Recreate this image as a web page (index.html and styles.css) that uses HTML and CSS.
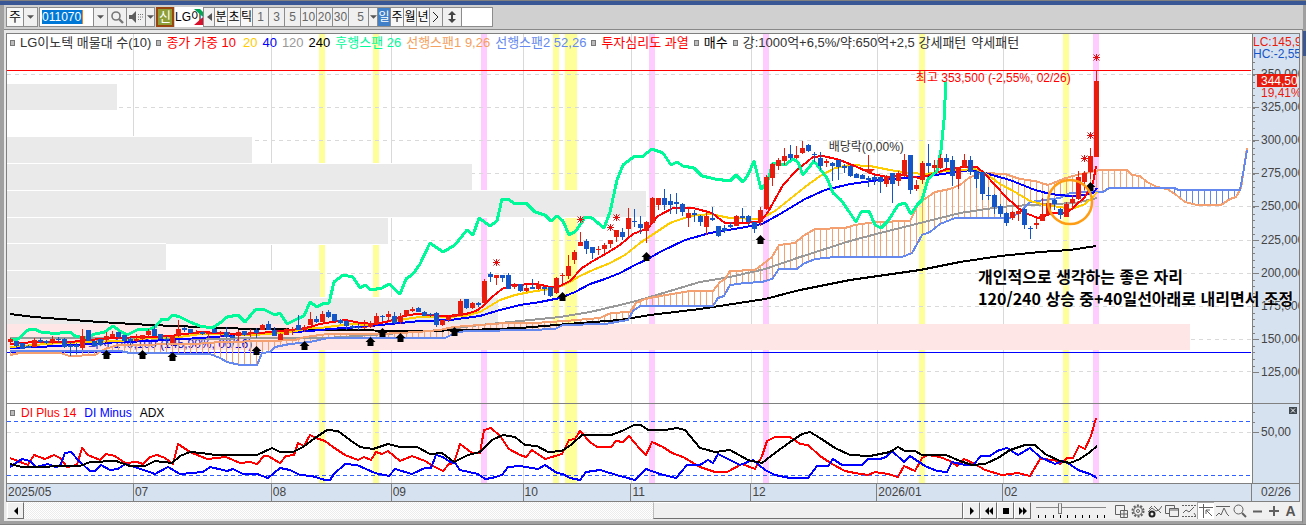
FILE: index.html
```html
<!DOCTYPE html>
<html lang="ko">
<head>
<meta charset="utf-8">
<title>LG이노텍 차트</title>
<link rel="stylesheet" href="styles.css">
</head>
<body>
<div class="window">
  <div class="titlebar"></div>
  <form class="toolbar">
    <button type="button" class="btn kind">주</button>
    <button type="button" class="btn drop" aria-label="종목 구분"><svg class="caret" viewBox="0 0 8 4"><path d="M0 0h8L4 4z"/></svg></button>
    <div class="code"><input class="code-input" type="text" value="011070" aria-label="종목코드"></div>
    <button type="button" class="btn drop" aria-label="종목 목록"><svg class="caret" viewBox="0 0 8 4"><path d="M0 0h8L4 4z"/></svg></button>
    <button type="button" class="btn icon-btn" aria-label="검색"><svg viewBox="0 0 14 14"><circle cx="6" cy="6" r="4" fill="none" stroke="#777" stroke-width="1.6"/><path d="M9 9l4 4" stroke="#777" stroke-width="2.4"/></svg></button>
    <button type="button" class="btn icon-btn" aria-label="음성"><svg viewBox="0 0 14 14"><path d="M0 5h3l4-4v12L3 9H0z" fill="#5c5c5c"/><path d="M9.500 4v7M11.500 4v7M13.500 4v4" stroke="#777" stroke-dasharray="1 1.500"/></svg></button>
    <button type="button" class="btn drop slim" aria-label="음성 설정"><svg class="caret" viewBox="0 0 8 4"><path d="M0 0h8L4 4z"/></svg></button>
    <span class="badge">신</span>
    <span class="name">LG이<svg class="flag" viewBox="0 0 9 16"><path d="M0 0h6l3 3v5z" fill="#00a651"/><path d="M9 8v8H0z" fill="#d8102c"/></svg></span>
    <button type="button" class="btn prev" aria-label="이전"><svg viewBox="0 0 5 8"><path d="M5 0v8L0 4z" fill="#555"/></svg></button>
    <button type="button" class="btn unit">분</button>
    <button type="button" class="btn unit">초</button>
    <button type="button" class="btn unit tick">틱</button>
    <button type="button" class="btn num">1</button>
    <button type="button" class="btn num">3</button>
    <button type="button" class="btn num">5</button>
    <button type="button" class="btn num">10</button>
    <button type="button" class="btn num">20</button>
    <button type="button" class="btn num">30</button>
    <input class="minutes" type="text" value="5" aria-label="분 간격">
    <button type="button" class="btn drop slim" aria-label="분 간격 목록"><svg class="caret" viewBox="0 0 8 4"><path d="M0 0h8L4 4z"/></svg></button>
    <button type="button" class="btn unit on">일</button>
    <button type="button" class="btn unit">주</button>
    <button type="button" class="btn unit">월</button>
    <button type="button" class="btn unit">년</button>
    <button type="button" class="btn more" aria-label="더보기"><svg viewBox="0 0 8 10"><path d="M1 0l5 5-5 5" fill="none" stroke="#222"/></svg></button>
    <button type="button" class="btn updown" aria-label="높이"><svg viewBox="0 0 8 12"><path d="M4 0l4 4H5v4h3l-4 4-4-4h3V4H0z" fill="#444"/></svg></button>
    <input class="blank" type="text" aria-label="입력">
  </form>

  <main class="frame">
    <div class="charts">
      <section class="panel main">
        <svg id="price" class="plot" viewBox="7 34 1245 369" preserveAspectRatio="none"></svg>
        <div class="legend">
          <i class="mark"></i><span class="c-dark">LG이노텍 매물대 수(10)</span>
          <i class="mark"></i><span class="c-red">종가 가중 10</span>
          <span class="c-gold">20</span><span class="c-blue">40</span><span class="c-gray">120</span><span class="c-black">240</span>
          <span class="c-green">후행스팬 26</span><span class="c-orange">선행스팬1 9,26</span><span class="c-sky">선행스팬2 52,26</span>
          <i class="mark"></i><span class="c-red">투자심리도 과열</span>
          <i class="mark"></i><span class="c-black">매수</span>
          <i class="mark"></i><span class="c-dark">강:1000억+6,5%/약:650억+2,5 강세패턴</span><span class="c-dark">약세패턴</span>
        </div>
        <span class="note high">최고 353,500 (-2,55%, 02/26)</span>
        <span class="note exdiv">배당락(0,00%)</span>
        <p class="memo">개인적으로 생각하는 좋은 자리<br>120/240 상승 중+40일선아래로 내리면서 조정</p>
      </section>
      <svg id="price-axis" class="axis" viewBox="1252 34 47 369"></svg>
      <section class="panel sub">
        <svg id="dmi" class="plot" viewBox="7 404 1245 79" preserveAspectRatio="none"></svg>
        <div class="legend small">
          <i class="mark"></i><span class="c-red">DI Plus 14</span><span class="c-blue">DI Minus</span><span class="c-black">ADX</span>
        </div>
      </section>
      <svg id="dmi-axis" class="axis sub-axis" viewBox="1252 404 47 79">
        <path d="M1252 412.500h3M1252 422.500h3M1252 432.500h7" stroke="#808080" shape-rendering="crispEdges"/>
        <text x="1261" y="436">50,00</text>
        <rect x="1289" y="407" width="8" height="7" fill="#404850"/>
        <path d="M1291 408.500l4 4M1295 408.500l-4 4" stroke="#fff"/>
      </svg>
      <div class="months">
        <span>2025/05</span><span>07</span><span>08</span><span>09</span><span>10</span><span>11</span><span>12</span><span>2026/01</span><span>02</span>
      </div>
      <div class="last-date">02/26</div>
    </div>

    <footer class="bottombar">
      <button type="button" class="raised" aria-label="왼쪽"><svg viewBox="0 0 8 8"><path d="M6 0v8L2 4z"/></svg></button>
      <div class="track"><div class="thumb"></div></div>
      <button type="button" class="raised" aria-label="재생"><svg viewBox="0 0 8 8"><path d="M2 0v8l4-4z"/></svg></button>
      <button type="button" class="raised" aria-label="되감기"><svg viewBox="0 0 8 8"><path d="M4 0v8L0 4zM8 0v8L4 4z"/></svg></button>
      <button type="button" class="raised" aria-label="정지"><svg viewBox="0 0 8 8"><path d="M1 1h6v6H1z"/></svg></button>
      <button type="button" class="raised" aria-label="빨리감기"><svg viewBox="0 0 8 8"><path d="M0 0v8l4-4zM4 0v8l4-4z"/></svg></button>
      <div class="speed">
        <input type="range" min="0" max="100" value="33" aria-label="속도">
        <svg viewBox="0 0 70 3" preserveAspectRatio="none"><path d="M2.500 0v3M9.500 0v3M17.500 0v3M24.500 0v3M31.500 0v3M39.500 0v3M46.500 0v3M53.500 0v3M61.500 0v3M68.500 0v3" stroke="#000"/></svg>
      </div>
      <div class="tools">
        <button type="button" aria-label="창 추가"><svg viewBox="0 0 14 14"><path d="M6 10.500H1.500V1.500h9V6M6.500 6.500h7v7h-7zM10 6.500v7M6.500 10h7"/></svg></button>
        <button type="button" aria-label="설정"><svg viewBox="0 0 14 14"><circle cx="7" cy="7" r="5.500" stroke-width="2" stroke-dasharray="2 1.450"/><circle cx="7" cy="7" r="4.200"/><circle cx="7" cy="7" r="1.500"/></svg></button>
        <button type="button" aria-label="지표 설정"><svg viewBox="0 0 14 14"><path d="M0 8l4-4 4 3 3-1 3-4M6 2l3 3 4 4M1 5l3-3"/><circle cx="4" cy="10" r="2.500" stroke="#222" stroke-width="2"/></svg></button>
        <button type="button" aria-label="창 겹치기"><svg viewBox="0 0 14 14"><path d="M4.500 9.500h-4v-8h9v3M4.500 4.500h9v8h-9zM4.500 6h9"/></svg></button>
        <button type="button" aria-label="차트 영역"><svg viewBox="0 0 14 14"><path d="M0 1.500h14M0 12.500h14" stroke-dasharray="2 1"/><path d="M1 9l3-3 3 2 5-5M12 9l2 3"/></svg></button>
        <button type="button" class="pressed" aria-label="십자선"><svg viewBox="0 0 14 14"><path d="M0 3.500h14M4.500 0v14M7 6l6 6M7 10V6h4"/></svg></button>
        <button type="button" aria-label="추세선"><svg viewBox="0 0 14 14"><path d="M0 2.500h14M0 12l3-3 2 2 3-7 3 6 2 2"/></svg></button>
        <button type="button" aria-label="돋보기"><svg viewBox="0 0 14 14"><circle cx="5.500" cy="5.500" r="4.500"/><path d="M9 9l4 4" stroke-width="2"/></svg></button>
        <button type="button" aria-label="축소"><svg viewBox="0 0 14 14"><path d="M3 7.500h9" stroke-width="2"/></svg></button>
        <button type="button" aria-label="확대"><svg viewBox="0 0 14 14"><path d="M2 7h10M7 2v10" stroke-width="2"/></svg></button>
        <button type="button" class="auto">A</button>
      </div>
    </footer>
  </main>
  <div class="side"></div>
</div>
<script src="chart.js"></script>
</body>
</html>
```
FILE: styles.css
```css
* { box-sizing: border-box; }
body {
  margin: 0;
  font: 12px/16px "Liberation Sans", "Noto Sans CJK KR", sans-serif;
  color: #333;
}
button, input { font: inherit; color: inherit; margin: 0; padding: 0; border: 0; border-radius: 0; }
.window {
  height: 100vh;
  min-height: 400px;
  display: grid;
  grid-template: 5px 24px 1fr / 4px 1fr 3px;
  background: #a0a0a0;
  border-bottom: 1px solid #808080;
  overflow: hidden;
}
.titlebar { grid-column: 1 / -1; background: #3a5795; border-top: 1px solid #808080; }

/* Toolbar */
.toolbar {
  grid-column: 2 / 3;
  display: flex;
  align-items: center;
  background: #d0d0d0;
  padding: 0 2px;
  overflow: hidden;
}
.btn, .code, .minutes, .blank, .name {
  height: 20px;
  border: 1px solid #8c8c8c;
  border-left-width: 0;
  background: #f0f0f0;
  display: flex;
  align-items: center;
  justify-content: center;
  flex: none;
  font-size: 13px;
}
.kind { width: 18px; border-left-width: 1px; background: #f8f8f8; color: #000; }
.drop { width: 14px; }
.drop.slim { width: 9px; }
.caret { width: 7px; height: 4px; fill: #555; }
.code { width: 55px; margin-left: 1px; border-left-width: 1px; background: #fff; justify-content: flex-start; padding-left: 2px; }
.code-input { width: 41px; height: 14px; font-size: 12px; line-height: 14px; background: #0078d7; color: #fff; border-right: 1px solid #f08020; }
.icon-btn { width: 19px; }
.icon-btn svg { width: 14px; height: 14px; }
.badge { width: 18px; height: 20px; margin: 0 1px; flex: none; border: 2px solid #994510; background: #8f9f38; color: #fff; font-size: 13px; line-height: 16px; text-align: center; }
.name { width: 28px; position: relative; background: #fff; color: #000; border: 0; justify-content: flex-start; overflow: hidden; white-space: nowrap; font-size: 12px; }
.flag { position: absolute; right: 0; top: 2px; width: 9px; height: 16px; }
.prev { width: 12px; border-left-width: 1px; }
.prev svg { width: 5px; height: 8px; }
.unit { width: 13px; background: #f8f8f8; color: #000; font-size: 12px; }
.unit.on { background: #4080c8; color: #fff; }
.tick { width: 12px; }
.num { width: 16px; color: #666; font-size: 12px; }
.minutes { width: 20px; text-align: right; padding-right: 4px; color: #666; border-right: 1px solid #8c8c8c; font-size: 12px; }
.more { width: 13px; }
.more svg { width: 8px; height: 10px; }
.updown { width: 19px; }
.updown svg { width: 8px; height: 12px; }
.blank { width: 31px; background: #fff; }

/* Frame */
.frame {
  grid-column: 2;
  min-width: 0;
  min-height: 0;
  display: flex;
  flex-direction: column;
  background: #e9e9e9;
  border-top: 1px solid #888;
  border-right: 1px solid #808080;
  border-bottom: 3px solid #a0a0a0;
  padding: 3px 2px 2px;
}
.side { grid-column: 3; height: 25px; margin-top: 2px; background: #3a5795; }
.charts {
  flex: 1;
  min-height: 0;
  display: grid;
  grid-template: minmax(0, 1fr) 80px 18px / minmax(0, 1fr) 47px;
  border: 1px solid #808080;
  background: #fff;
}
.panel { display: grid; position: relative; min-width: 0; min-height: 0; }
.plot, .legend { grid-area: 1 / 1; }
.plot { width: 100%; height: 100%; display: block; min-height: 0; }
.axis { width: 47px; height: 100%; min-height: 0; background: #d7e2f0; overflow: hidden; font-size: 12px; fill: #444; box-shadow: inset 1px 0 #808080; }
.sub, .sub-axis { border-top: 1px solid #808080; }
.months {
  display: grid;
  grid-template-columns: 127fr 138fr 120fr 132fr 108fr 120fr 126fr 126fr 249fr;
  background: #d7e2f0;
  border-top: 1px solid #808080;
}
.months span { padding-left: 1px; border-right: 1px solid #808080; color: #444; }
.last-date { background: #d7e2f0; border-top: 1px solid #808080; padding-left: 9px; color: #444; }
.legend {
  display: flex;
  align-items: center;
  align-self: start;
  gap: 5px;
  height: 17px;
  padding-left: 3px;
  font-size: 13px;
  white-space: nowrap;
  overflow: hidden;
}
.legend.small { font-size: 12px; gap: 8px; height: 17px; }
.small .mark { margin-right: -2px; }
.mark { width: 5px; height: 6px; border: 1px solid #777; background: #bbb; flex: none; }
.c-gold { margin-left: 2px; }
.c-dark { color: #333; }
.c-black { color: #000; }
.c-red { color: #f00; }
.c-gold { color: #fc0; }
.c-blue { color: #00f; }
.c-gray { color: #999; }
.c-green { color: #00fa9a; }
.c-orange { color: #f4a060; }
.c-sky { color: #6488ee; }
.note { position: absolute; font-size: 12px; white-space: nowrap; }
.high { left: 73%; top: 36px; color: #f00; }
.exdiv { left: 66%; top: 105px; }
.memo {
  position: absolute;
  z-index: 1;
  left: 78%;
  top: 231px;
  margin: 0;
  font: 700 16px/22px "Noto Sans CJK KR", sans-serif;
  color: #000;
  white-space: nowrap;
  text-shadow: 0 0 2px #fff, 0 0 1px #fff;
}

/* Bottom bar */
.bottombar { flex: none; height: 17px; display: flex; background: #f0f0f0; padding-left: 1px; }
.raised {
  width: 17px;
  flex: none;
  display: flex;
  align-items: center;
  justify-content: center;
  background: #f0f0f0;
  border: 1px solid;
  border-color: #fff #707070 #707070 #fff;
}
.raised svg { width: 8px; height: 8px; fill: #000; }
.track {
  flex: 1;
  display: flex;
  justify-content: flex-end;
  background: repeating-conic-gradient(#fff 0 25%, #ececec 0 50%) 0 0 / 2px 2px;
}
.thumb { width: 33%; background: #f0f0f0; border: 1px solid; border-color: #fff #707070 #707070 #bbb; }
.speed { width: 70px; margin-left: 5px; flex: none; display: flex; flex-direction: column; }
.speed input { appearance: none; width: 100%; height: 13px; background: linear-gradient(#888, #888) 0 5px / 100% 1px no-repeat; }
.speed input::-webkit-slider-thumb { appearance: none; width: 4px; height: 11px; background: #eee; border: 1px solid #777; border-top-color: #bbb; }
.speed svg { width: 100%; height: 3px; }
.tools { flex: none; display: flex; margin: 0 1px 0 6px; }
.tools button { width: 17px; background: transparent; display: flex; align-items: center; justify-content: center; }
.tools svg { width: 14px; height: 14px; fill: none; stroke: #606060; }
.tools .pressed { background: #fff; border-left: 1px solid #aaa; border-top: 1px solid #aaa; }
.tools .auto { font-weight: 700; font-size: 14px; color: #555; }
```
FILE: chart.js
```js
const NS = 'http://www.w3.org/2000/svg';
const add = (root, tag, attrs, text) => {
  const el = document.createElementNS(NS, tag);
  for (const k in attrs) el.setAttribute(k, attrs[k]);
  if (text) el.textContent = text;
  root.appendChild(el);
  return el;
};
const pairs = s => s.trim().split(/\s+/).map(p => p.split(',').map(Number));
const line = (root, pts, color, width) =>
  add(root, 'polyline', { points: pts, fill: 'none', stroke: color, 'stroke-width': width, 'stroke-linejoin': 'round', 'shape-rendering': 'crispEdges' });
const rect = (root, x, y, w, h, fill) => add(root, 'rect', { x, y, width: w, height: h, fill, 'shape-rendering': 'crispEdges' });

const price = document.getElementById('price');
const dmi = document.getElementById('dmi');
const months = [133, 271, 391, 523, 631, 751, 877, 1003];
const yellow = [[319, 6], [373, 6], [553, 6], [565, 12], [919, 6], [1063, 6]];
const pink = [[481, 6], [649, 6], [763, 6], [1093, 6]];

function backdrop(root, top, height, rows) {
  for (const [x, w] of yellow) rect(root, x, top, w, height, '#ffff99');
  for (const [x, w] of pink) rect(root, x, top, w, height, '#ffccff');
  for (const x of months) rect(root, x, top, 1, height, '#d9d9d9');
  for (const y of rows) add(root, 'path', { d: `M7 ${y + 0.5}H1252`, stroke: '#d9d9d9', 'stroke-dasharray': '4 4', 'shape-rendering': 'crispEdges' });
}

/* Price panel */
backdrop(price, 34, 369, [74, 107, 140, 173, 206, 240, 273, 306, 339, 371]);
[[84, 117], [137, 252], [164, 472], [191, 646], [218, 388], [244, 166], [271, 320], [298, 498]].forEach(([y, right]) => {
  rect(price, 7, y - 1, right - 7, 28, '#ffffff');
  rect(price, 7, y, right - 7, 26, '#eaeaea');
});
rect(price, 7, 324, 1183, 26, '#ffe6e6');
rect(price, 7, 70, 1244, 1, '#ff0000');
rect(price, 7, 352, 1244, 1, '#0000ff');
add(price, 'text', { x: 88, y: 348, fill: '#1010c8', 'font-size': 12 }, '최저 140,100 (145,90%, 06/16)');

const spanA = '10,355 20,353 60,353 70,356 95,355 105,349 118,345 195,344 220,342 270,341 295,340 305,337 328,334 380,334 417,332 440,330 453,327 480,325 505,323 535,323 565,321 600,318 611,313 630,312 636,303 645,299 660,296 690,291 713,291 720,282 725,279 730,271 755,270 763,264 772,257 779,245 795,243 803,236 815,229 845,228 855,225 875,222 910,221 918,205 922,201 935,192 950,189 960,185 970,177 985,173 1005,174 1020,179 1035,181 1048,185 1063,179 1073,176 1090,172 1100,170 1127,170 1132,175 1140,176 1147,182 1157,187 1167,189 1175,194 1185,202 1197,205 1221,205 1230,199 1236,197 1241,188 1247,148';
const spanB = '10,351 120,351 130,353 210,354 220,358 227,362 240,365 257,365 262,353 270,352 275,347 290,344 310,342 328,338 445,338 457,332 470,331 530,330 555,329 563,325 605,324 628,320 633,311 640,306 713,306 718,298 724,296 730,285 745,283 762,282 772,279 779,269 797,269 803,264 815,259 835,257 902,257 912,253 922,235 930,232 940,224 955,218 1010,218 1020,212 1030,202 1060,198 1070,193 1085,192 1103,192 1109,188 1175,188 1178,190 1240,190 1244,168 1247,150';
const at = (pts, x) => {
  for (let i = 1; i < pts.length; i++) {
    if (x <= pts[i][0]) {
      const [a, b] = pts[i - 1], [c, d] = pts[i];
      return b + (d - b) * (x - a) / (c - a);
    }
  }
  return pts[pts.length - 1][1];
};
const a = pairs(spanA), b = pairs(spanB);
for (let x = 10; x < 1245; x += 6) {
  const y1 = at(a, x), y2 = at(b, x);
  rect(price, x, Math.min(y1, y2), 1, Math.abs(y1 - y2), x > 1172 ? '#6488ee' : '#f4a070');
}

line(price, '10,338 100,338 200,339 270,338 327,338 400,333 440,330 480,325 520,321 560,317 590,312 620,305 640,300 670,291 700,282 730,277 765,269 800,257 850,241 880,233 920,223 960,213 1000,207 1030,205 1075,203 1097,198', '#999999', 2);
line(price, '10,314 34,317 60,319 100,322 150,325 200,327 250,329 328,330 420,331 470,330 520,328 580,323 620,320 650,315 700,309 765,299 800,290 850,280 920,270 960,262 1000,256 1040,252 1070,250 1096,246', '#000000', 2);
line(price, spanA, '#f4a070', 2);
line(price, spanB, '#6488ee', 2);
line(price, '10,348 60,346 100,343 150,341 200,338 240,335 280,333 310,331 330,329 360,327 390,324 420,321 450,320 480,316 500,310 520,305 540,302 560,298 575,292 590,284 605,279 620,273 635,265 646,260 660,252 685,240 710,233 740,228 762,224 780,214 805,199 825,190 850,184 880,180 920,177 950,173 970,170 985,173 1010,180 1035,190 1050,194 1070,196 1085,195 1093,193 1097,188', '#0000ff', 2);
line(price, '10,347 34,345 60,343 90,342 120,341 150,338 180,337 200,334 220,334 250,335 270,334 290,332 310,328 320,328 350,324 370,325 390,321 420,317 445,317 465,316 480,312 490,306 500,300 515,295 530,292 550,289 562,286 570,282 580,276 593,270 610,263 625,255 640,243 655,233 670,223 690,216 710,214 730,218 760,219 775,211 790,199 805,187 820,176 835,168 850,165 870,166 890,170 910,173 925,174 945,171 975,169 985,173 1000,184 1015,192 1030,201 1045,205 1060,207 1072,209 1085,204 1093,197 1097,192', '#ffcc00', 2);
line(price, '10,344 34,342 70,342 90,340 110,338 150,337 170,336 185,334 200,332 220,333 240,334 260,333 280,331 300,329 310,327 320,324 332,322 346,320 360,323 375,324 390,321 403,316 416,314 430,315 445,316 460,315 470,313 478,310 484,305 492,297 502,289 512,285 537,284 550,287 560,286 570,281 582,268 593,261 607,253 620,245 633,234 648,228 658,216 673,208 693,208 712,213 725,223 740,223 760,222 768,212 783,185 797,170 813,157 823,156 840,160 857,167 873,174 887,177 903,175 920,178 930,175 947,169 964,167 977,167 985,174 995,185 1007,198 1023,212 1038,218 1053,213 1067,213 1075,206 1085,197 1093,183 1096,166', '#ff0000', 2);
line(price, '11,339 18,339 28,330 34,329 41,332 50,333 60,333 70,332 75,336 85,338 95,334 105,332 113,326 120,331 127,335 137,330 150,329 155,327 162,319 167,320 173,315 180,317 190,322 200,326 212,328 220,323 227,317 238,315 245,322 255,310 263,309 275,315 280,313 287,324 297,319 304,316 310,302 317,307 324,303 329,303 334,282 343,275 353,277 360,288 365,285 371,290 382,288 389,284 400,294 406,279 413,274 420,264 430,243 443,252 455,245 467,230 473,235 479,218 490,226 497,221 502,199 508,199 515,204 526,203 535,212 545,215 551,221 557,216 563,221 569,235 576,231 585,217 592,218 604,228 610,212 617,180 623,165 635,156 642,157 652,149 663,153 671,165 677,162 683,166 694,168 702,176 715,179 730,181 736,175 743,182 748,175 754,161 761,189 767,183 773,163 785,165 793,159 798,162 803,175 814,161 820,169 827,178 833,193 841,200 850,213 856,222 861,212 869,211 875,225 881,228 888,221 898,205 905,203 911,214 917,205 922,200 928,179 937,171 941,150 944,120 946,81', '#00fa9a', 3);

/* Candles, one per trading day: direction, body top, body bottom, wick top, wick bottom */
const candles = `r339,342,338,344 b341,346,341,348 b343,349,343,349 b346,348,345,348 r340,347,338,347 b340,342,338,343 b341,343,340,344 r339,342,336,344 b339,340,337,343 b339,347,338,348
b345,347,342,356 b345,347,343,354 r336,348,329,350 b330,341,330,341 b341,346,341,346 b339,345,339,346 r336,340,332,343 r334,337,331,337 b332,337,332,339 b335,341,335,342
b339,341,337,345 r339,341,334,342 r335,339,335,340 r331,335,329,337 b329,336,325,336 b334,339,334,339 b339,340,336,345 r336,343,335,343 r329,336,320,337 b328,330,327,332
b329,333,329,333 r332,334,330,334 b332,334,331,335 r333,334,332,338 b329,333,328,333 r332,333,331,337 b332,337,327,338 b336,338,335,338 r332,336,330,341 b331,335,331,336
r332,334,329,337 b330,333,328,338 r325,330,324,330 b324,330,321,330 b330,336,327,336 r334,340,333,340 r329,335,328,335 r330,331,327,335 b325,330,315,330 r327,330,325,332
r319,325,312,325 b319,322,316,323 r314,322,311,322 b312,317,310,318 b314,321,314,322 b320,323,319,324 b321,326,320,330 b326,328,325,329 b327,328,324,330 r327,328,320,329
r323,327,321,328 r316,324,313,324 b316,317,315,321 r314,317,311,320 b316,323,312,324 r316,322,313,324 r310,316,310,317 r309,311,307,312 b308,312,307,312 b312,316,311,316
b314,315,313,317 b313,325,312,327 r320,325,320,326 r317,320,315,322 r315,317,314,317 r301,315,299,316 b299,308,299,309 r303,308,302,309 b303,305,302,307 r281,303,279,304
b274,277,272,282 r275,278,275,285 b275,278,275,282 b275,289,273,289 r285,287,283,289 b284,291,284,292 r288,291,285,292 b287,289,279,289 r284,289,281,290 b287,289,287,295
b287,296,287,297 r278,293,277,294 r275,276,273,284 r266,276,255,279 r252,260,250,264 r242,246,232,246 b241,249,239,254 b247,253,247,259 r249,250,246,255 r245,249,243,253
r240,244,240,248 r230,237,230,242 b232,237,228,240 r218,229,208,236 b221,222,209,227 b224,228,216,234 r222,231,221,243 r198,223,197,223 r198,205,198,210 b198,205,189,210
b201,205,194,214 b202,204,193,214 b204,212,203,216 r213,218,208,227 b213,215,210,222 b216,222,215,226 r216,227,210,235 b218,220,207,221 b226,236,226,237 b228,231,225,233
b225,227,222,228 r216,226,215,226 b216,218,208,222 b216,222,215,225 b222,229,222,233 r210,222,207,226 r177,209,175,210 r164,178,163,186 r160,166,158,170 r156,161,148,165
b154,158,145,160 r155,158,146,159 r148,153,141,154 b145,151,144,152 b154,155,152,162 b158,166,152,170 r161,163,159,167 b163,166,162,181 b160,167,160,180 b166,168,164,173
b166,176,165,177 b174,178,173,178 b175,179,174,179 b178,180,176,187 b177,180,175,185 b177,182,177,193 r176,184,175,187 b173,184,173,203 r173,181,171,186 r160,175,154,177
b155,190,155,194 r185,189,180,191 r163,180,161,184 b163,166,144,173 r165,168,160,172 r158,168,154,169 b158,162,154,168 b160,176,156,186 r167,179,167,189 r160,167,154,168
b160,172,156,175 b171,179,170,188 b172,194,172,200 b195,196,187,200 b195,207,194,214 b206,214,204,217 b213,223,212,226 r212,218,211,220 r211,214,205,221 b209,225,208,229
b228,229,226,239 r223,225,218,229 r214,221,198,221 r203,215,202,216 b200,204,199,210 b209,215,208,219 r204,217,202,217 r199,203,195,210 r177,199,171,200 r173,182,171,190
r156,172,148,179 r81,157,70,157`.split(/\s+/);
candles.forEach((c, i) => {
  const color = c[0] === 'r' ? '#e81b0c' : '#1455c8';
  const [top, bottom, high, low] = c.slice(1).split(',').map(Number);
  const x = 10 + 6 * i;
  rect(price, x, high, 1, low - high, color);
  rect(price, x - 2, top, 5, bottom - top, color);
});

/* Buy arrows, overheated marks, ex-dividend arrow */
pairs('106,354 142,354 172,356 256,350 304,345 370,341 382,332 400,337 454,331 562,296 646,256 760,239 1090,186').forEach(([x, y]) =>
  add(price, 'path', { d: `M${x + 0.5} ${y - 4}l5 5h-2v4h-6v-4h-2z` }));
pairs('496,262 580,219 610,227 616,217 1096,57 1090,135 1084,158').forEach(([x, y]) =>
  add(price, 'path', { d: `M${x - 3} ${y + 0.5}h7M${x + 0.5} ${y - 3}v7M${x - 2.5} ${y - 2.5}l6 6M${x + 3.5} ${y - 2.5}l-6 6`, stroke: '#e01010' }));
add(price, 'path', { d: 'M868 155h1v14h6l-6 5-6-5h5z', fill: '#e81b0c' });
add(price, 'circle', { cx: 1070, cy: 202, r: 22, fill: 'none', stroke: '#ff9d14', 'stroke-width': 2.5 });

/* Directional movement panel */
backdrop(dmi, 404, 79, [432]);
for (const y of [421, 475]) add(dmi, 'path', { d: `M7 ${y + 0.5}H1252`, stroke: '#3060ff', 'stroke-dasharray': '4 3', 'shape-rendering': 'crispEdges' });
line(dmi, '10,458 28,465 34,455 45,459 54,455 60,458 67,467 77,465 82,448 88,455 100,460 106,454 115,456 125,463 137,462 143,464 150,457 157,455 165,458 173,464 178,444 190,452 207,459 226,457 240,463 250,462 257,464 264,456 268,456 280,463 286,456 294,455 298,443 304,446 310,435 316,438 325,441 333,447 345,455 358,460 364,457 371,460 376,452 382,454 388,451 400,461 412,456 425,461 433,466 443,471 449,464 454,463 460,444 472,453 480,453 484,430 491,428 500,436 509,449 520,455 526,457 532,450 545,459 562,454 569,440 575,439 580,431 590,442 597,447 611,447 616,441 623,442 629,436 640,449 646,455 652,442 663,447 672,453 683,457 700,467 715,472 727,472 742,464 755,469 762,456 767,441 775,437 790,437 800,444 808,445 820,456 832,464 845,471 855,473 868,475 875,472 888,474 898,477 904,466 915,471 922,458 928,455 940,457 950,461 957,466 964,459 975,464 985,470 1002,475 1018,473 1030,476 1040,459 1055,460 1060,464 1067,458 1073,458 1079,446 1085,449 1091,436 1096,418', '#ff0000', 2);
line(dmi, '10,467 22,459 30,461 36,467 48,464 55,467 60,466 65,453 71,452 80,462 90,471 95,471 101,465 110,470 118,469 125,464 135,467 155,474 168,467 180,474 203,472 210,467 227,471 233,469 243,474 257,474 268,478 280,468 290,470 300,475 312,476 325,480 330,480 334,474 345,464 357,465 375,473 389,476 395,469 412,474 425,468 431,468 436,455 443,457 450,462 455,463 460,470 478,474 485,479 492,478 502,475 508,467 520,466 538,469 545,465 557,473 563,474 570,478 580,480 586,472 600,470 620,476 635,480 646,469 660,474 676,478 687,465 700,465 708,460 713,463 718,454 740,465 753,460 765,470 775,475 790,478 808,478 817,466 828,466 833,459 842,465 862,465 868,459 880,459 886,457 892,451 904,462 910,456 925,466 937,471 947,472 952,462 965,465 973,465 981,456 990,456 997,451 1007,448 1018,455 1030,448 1040,457 1055,464 1062,461 1068,463 1078,470 1090,474 1097,478', '#0000ff', 2);
line(dmi, '10,464 22,467 80,466 90,462 116,461 130,466 145,466 155,461 172,463 180,456 190,452 202,453 215,455 257,455 272,448 280,452 293,452 303,447 315,438 327,430 338,431 350,440 360,447 373,449 388,444 400,447 417,447 430,454 442,453 454,462 468,455 480,452 492,440 503,435 515,437 525,445 537,446 548,452 562,451 572,444 582,435 611,435 622,431 634,425 641,425 648,430 665,430 677,428 685,430 700,448 715,452 730,450 748,460 762,463 775,453 790,442 802,434 810,432 820,438 835,448 850,455 870,456 890,452 898,447 905,451 915,451 922,455 946,455 960,461 972,465 985,464 998,458 1010,450 1025,445 1035,445 1045,454 1060,461 1070,463 1080,459 1090,452 1097,446', '#000000', 2);

/* Price scale */
const scale = document.getElementById('price-axis');
for (let i = 0; i < 47; i++) {
  const y = Math.round(62 + i * 6.6);
  if (y < 403) rect(scale, 1252, y, 3, 1, '#808080');
}
[350, 325, 300, 275, 250, 225, 200, 175, 150, 125].forEach((v, i) => {
  const y = Math.round(74 + i * 33.1);
  rect(scale, 1252, y, 7, 1, '#808080');
  add(scale, 'text', { x: 1261, y: y + 4 }, `${v},000`);
});
rect(scale, 1257, 74, 40, 13, '#e81b0c');
add(scale, 'text', { x: 1261, y: 85, fill: '#ffffff' }, '344,50');
add(scale, 'text', { x: 1261, y: 97, fill: '#e81b0c' }, '19,41%');
add(scale, 'text', { x: 1253, y: 46, fill: '#e81b0c' }, 'LC:145,9');
add(scale, 'text', { x: 1253, y: 58, fill: '#1455c8' }, 'HC:-2,55');
```
